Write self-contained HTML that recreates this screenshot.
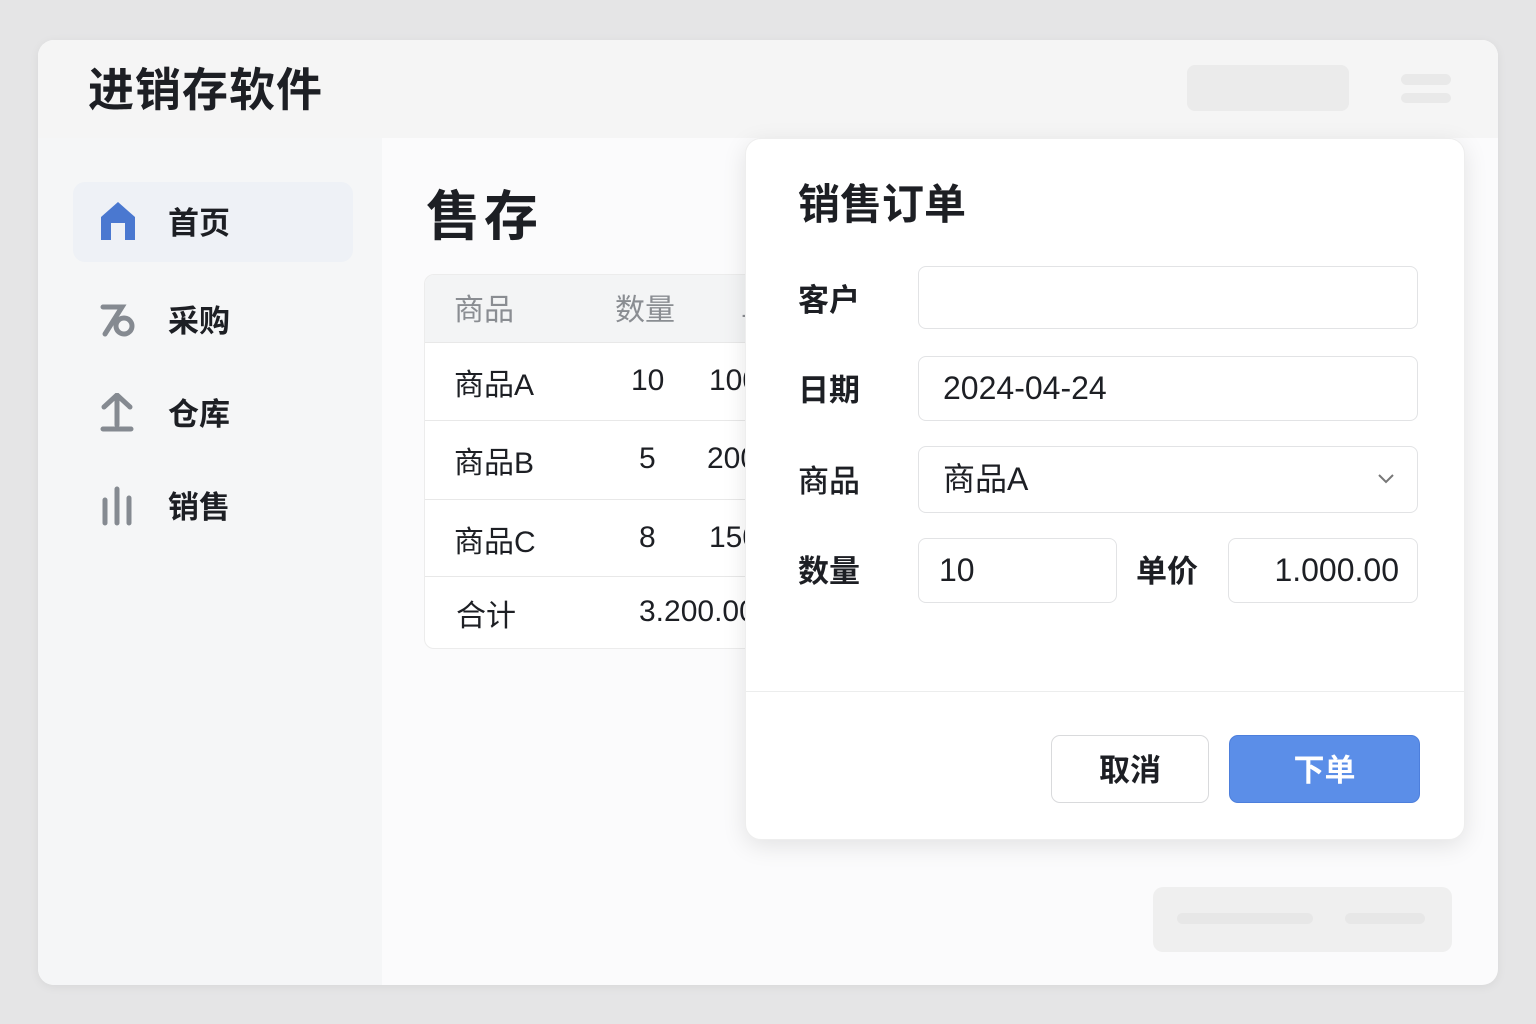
<!DOCTYPE html>
<html><head><meta charset="utf-8"><style>
*{margin:0;padding:0;box-sizing:border-box}
body{width:1536px;height:1024px;background:#e5e5e6;font-family:"Liberation Sans","Noto Sans CJK SC",sans-serif;position:relative;overflow:hidden;color:#1d1f24}
.card{position:absolute;left:38px;top:40px;width:1460px;height:945px;background:#fbfbfc;border-radius:16px;overflow:hidden;box-shadow:0 2px 10px rgba(0,0,0,.06)}
.side{position:absolute;left:0;top:0;width:344px;height:945px;background:#f5f6f7}
.top{position:absolute;left:0;top:0;width:1460px;height:98px;background:#f5f5f5}
.abs{position:absolute}
.title{left:50px;top:14px;font-size:46px;font-weight:700;letter-spacing:1px}
.nav{left:35px;width:280px;height:80px;font-size:31px;font-weight:700;display:flex;align-items:center}
.nav span{position:absolute;left:95px;top:16px}
.tbl{left:386px;top:234px;width:340px;height:375px;background:#fff;border:1px solid #ececec;border-radius:10px;overflow:hidden}
.tr{position:absolute;left:0;width:340px;border-bottom:1px solid #e8e8e8;font-size:30px}
.tr div{position:absolute}
.modal{position:absolute;left:745px;top:138px;width:720px;height:702px;background:#fff;border-radius:16px;box-shadow:0 6px 24px rgba(0,0,0,.10);border:1px solid #eee}
.lbl{position:absolute;font-size:31px;font-weight:700}
.inp{position:absolute;border:1.5px solid #e2e3e5;border-radius:8px;background:#fff;font-size:32px;display:flex;align-items:center}
</style></head><body>
<div class="card">
 <div class="side"></div>
 <div class="top"></div>
 <div class="abs title">进销存软件</div>
 <div class="abs" style="left:1149px;top:25px;width:162px;height:46px;background:#ebebeb;border-radius:8px"></div>
 <div class="abs" style="left:1363px;top:34px;width:50px;height:11px;background:#e9e9e9;border-radius:6px"></div>
 <div class="abs" style="left:1363px;top:53px;width:50px;height:10px;background:#e9e9e9;border-radius:6px"></div>

 <div class="abs nav" style="top:142px;background:#eef1f6;border-radius:12px"><svg class="abs" style="left:27px;top:19px" width="36" height="40" viewBox="0 0 36 40"><path d="M1 16 L18 1 L35 16 V39 H25 V22 H11 V39 H1 Z" fill="#4a78d0"/></svg><span>首页</span></div>
 <div class="abs nav" style="top:240px"><svg class="abs" style="left:27px;top:22px" width="36" height="36" viewBox="0 0 36 36"><path d="M3 5 H22 L5 32" stroke="#858a91" stroke-width="5" fill="none" stroke-linecap="round"/><circle cx="24" cy="24" r="8" stroke="#858a91" stroke-width="5" fill="none"/></svg><span>采购</span></div>
 <div class="abs nav" style="top:333px"><svg class="abs" style="left:27px;top:20px" width="34" height="40" viewBox="0 0 34 40"><path d="M4 14 L17 2 L30 14 M17 3 V32 M3 36 H31" stroke="#858a91" stroke-width="5" fill="none" stroke-linecap="round"/></svg><span>仓库</span></div>
 <div class="abs nav" style="top:426px"><svg class="abs" style="left:27px;top:20px" width="36" height="40" viewBox="0 0 36 40"><path d="M5 14 V37 M17 3 V37 M29 12 V37" stroke="#858a91" stroke-width="5" fill="none" stroke-linecap="round"/></svg><span>销售</span></div>

 <div class="abs" style="left:388px;top:132px;font-size:54px;font-weight:700;letter-spacing:4px">售存</div>
 <div class="abs tbl">
  <div class="tr" style="top:0;height:68px;background:#f3f4f5;color:#8a8d92"><div style="left:29px;top:10px">商品</div><div style="left:190px;top:10px">数量</div><div style="left:316px;top:10px">单</div></div>
  <div class="tr" style="top:68px;height:78px"><div style="left:29px;top:17px">商品A</div><div style="left:206px;top:21px">10</div><div style="left:284px;top:21px">100</div></div>
  <div class="tr" style="top:146px;height:79px"><div style="left:29px;top:17px">商品B</div><div style="left:214px;top:21px">5</div><div style="left:282px;top:21px">200</div></div>
  <div class="tr" style="top:225px;height:77px"><div style="left:29px;top:17px">商品C</div><div style="left:214px;top:21px">8</div><div style="left:284px;top:21px">150</div></div>
  <div class="tr" style="top:302px;height:73px;border:none"><div style="left:31px;top:14px">合计</div><div style="left:214px;top:18px">3.200.00</div></div>
 </div>
</div>

<div class="modal">
 <div class="lbl" style="left:52px;top:32px;font-size:42px">销售订单</div>
 <div class="lbl" style="left:52px;top:136px">客户</div>
 <div class="inp" style="left:172px;top:127px;width:500px;height:63px"></div>
 <div class="lbl" style="left:52px;top:226px">日期</div>
 <div class="inp" style="left:172px;top:217px;width:500px;height:65px;padding-left:24px">2024-04-24</div>
 <div class="lbl" style="left:52px;top:317px;font-weight:500">商品</div>
 <div class="inp" style="left:172px;top:307px;width:500px;height:67px;padding-left:24px"><span style="position:relative;top:-3px">商品A</span><svg class="abs" style="left:458px;top:26px" width="18" height="12" viewBox="0 0 18 12"><path d="M2 2 L9 9 L16 2" stroke="#777" stroke-width="2" fill="none"/></svg></div>
 <div class="lbl" style="left:52px;top:407px">数量</div>
 <div class="inp" style="left:172px;top:399px;width:199px;height:65px;padding-left:20px">10</div>
 <div class="lbl" style="left:390px;top:407px">单价</div>
 <div class="inp" style="left:482px;top:399px;width:190px;height:65px;justify-content:flex-end;padding-right:18px">1.000.00</div>
 <div class="abs" style="left:0;top:552px;width:718px;height:1px;background:#eceded"></div>
 <div class="abs" style="left:305px;top:596px;width:158px;height:68px;border:1.5px solid #d9dadc;border-radius:9px;font-size:31px;font-weight:700;display:flex;align-items:center;justify-content:center;padding-bottom:4px">取消</div>
 <div class="abs" style="left:483px;top:596px;width:191px;height:68px;background:#5b8ee8;border:1.5px solid #4d7fdc;border-radius:9px;font-size:31px;font-weight:700;color:#fff;display:flex;align-items:center;justify-content:center;padding-bottom:4px">下单</div>
</div>

<div class="abs" style="left:1153px;top:887px;width:299px;height:65px;background:#efefef;border-radius:10px"></div>
<div class="abs" style="left:1177px;top:913px;width:136px;height:11px;background:#e7e7e7;border-radius:6px"></div>
<div class="abs" style="left:1345px;top:913px;width:80px;height:11px;background:#e7e7e7;border-radius:6px"></div>
</body></html>
